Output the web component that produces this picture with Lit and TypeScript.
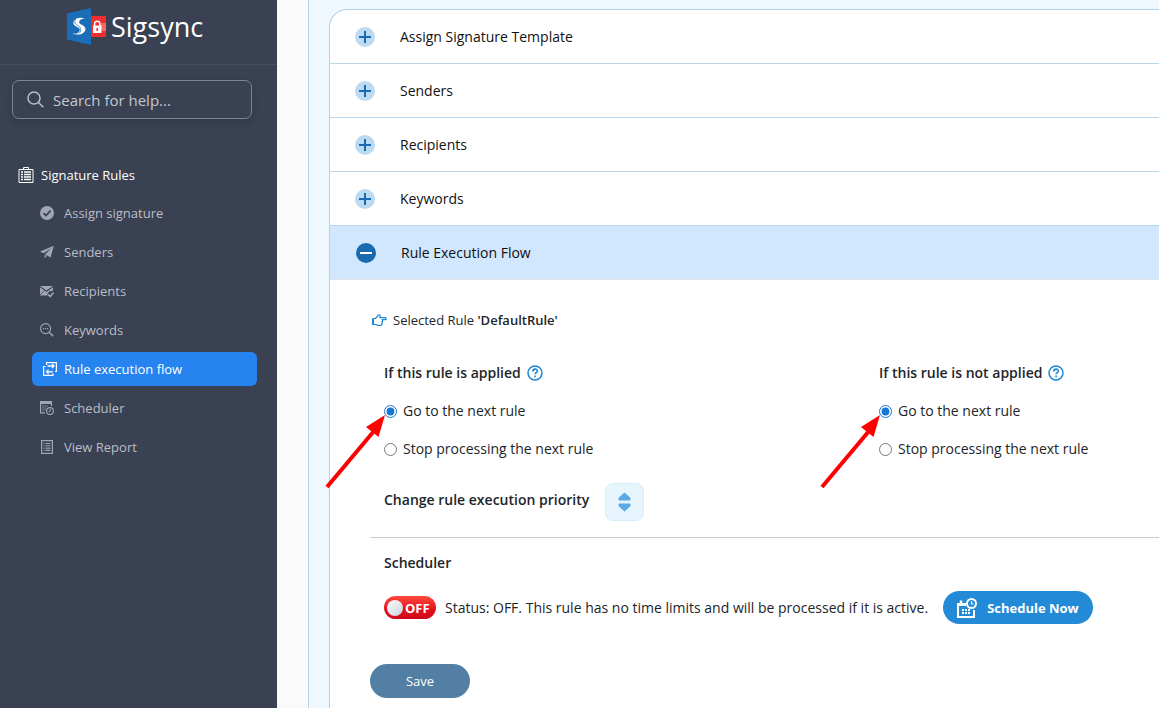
import { LitElement, html, css, svg, nothing } from "lit";
import { customElement, state } from "lit/decorators.js";

const box = (size: number, body: unknown, view = size) =>
  html`<svg width=${size} height=${size} viewBox="0 0 ${view} ${view}" fill="none" aria-hidden="true">${body}</svg>`;

const icons: Record<string, unknown> = {
  assign: box(14, svg`<circle cx="7" cy="7" r="7" fill="currentColor"/><path d="M3.6 7.2 6 9.6 10.6 4.6" stroke="#394152" stroke-width="1.7"/>`),
  senders: box(14, svg`<path d="M13.800.8 0 6.600l3.600 1.700L11 3.200 5.300 9.300v.2l5.300 3.100zM4.600 9.600v3.900l2-2.600z" fill="currentColor"/>`),
  recipients: box(14, svg`<path d="M0 2h13L6.500 6.600zM0 3.300v8.200h7.200l.5-2L9 7.600l4-.8V3.300L6.500 7.900z" fill="currentColor"/><path d="m0 11 4-4.200" stroke="#394152" stroke-width=".8"/><path d="m8 10.400 2.200 2.200 3.400-4" stroke="currentColor" stroke-width="1.500"/>`),
  keywords: box(14, svg`<circle cx="5.600" cy="5.600" r="5" stroke="currentColor" stroke-width="1.100"/><path d="m9.200 9.200 4 4" stroke="currentColor" stroke-width="1.600"/><path d="M3 5h1.200v1.200H3zM5 5h1.200v1.200H5zM7 5h1.200v1.200H7z" fill="currentColor"/>`),
  flow: box(14, svg`<path d="M3.500 3V.600h9.900V9.500H12M10 11.500v1.900H.600V4.500H2.500" stroke="currentColor" stroke-width="1.200"/><path d="M4.500 4h6.500M9 2l2 2-2 2M10 9.800H3.500M5.500 7.800l-2 2 2 2" stroke="currentColor" stroke-width="1.300"/>`),
  scheduler: box(14, svg`<path d="M0 0h12v3H0z" fill="currentColor"/><path d="M.6 2v9.900H5M11.500 3v2" stroke="currentColor" stroke-width="1.200"/><path d="M2.500 5h5.500M2.500 7h4M2.500 9H6" stroke="currentColor" stroke-width="1.100" stroke-dasharray="1.200 .8"/><circle cx="10" cy="10" r="3.400" stroke="currentColor" stroke-width="1.100"/><path d="M10.200 8v2.400H8.600" stroke="currentColor"/>`),
  report: box(14, svg`<path d="M1.600.6h10.800v12.800H1.600z" stroke="currentColor" stroke-width="1.200"/><path d="M3.500 3.500h1M5.500 3.500h5M3.500 5.800h1M5.500 5.800h5M3.500 8.100h1M5.500 8.100h5M3.500 10.400h1M5.500 10.400h5" stroke="currentColor" stroke-width="1.100"/>`),
};

const clipboard = box(16, svg`<path d="M5.500 2.500V.5h5v2M1 2.500h14v13H1z" stroke="#fff"/><path d="M3 5h2M6 5h7M3 7.500h2M6 7.500h7M3 10h2M6 10h7M3 12.500h2M6 12.500h7" stroke="#fff" stroke-width="1.300"/>`);

const logo = html`<svg width="40" height="38" viewBox="0 0 40 38" aria-hidden="true">
  <path d="M24 8h15v21H24z" fill="#ee2d2f"/>
  <path d="M34 15h5v8h-5z" fill="#f46a68"/>
  <path d="M0 5.500 24 0v37L0 31.500z" fill="#1b6db8"/>
  <path d="M18.500 11c-5-2.500-11-1-12 2.800-.8 3.200 1.700 4.300 4.500 5.600 2.500 1.200 2.500 3.600-.5 5.800-1.500.8-3.500.5-5 0 4 2.600 10.500 1.500 12.500-2.200 1.500-3.200-.8-5.100-3.800-6.500-3-1.500-2.500-4 .3-5.300 1.300-.6 2.700-.6 4-.2z" fill="#fff"/>
  <path d="M8.800 11c-2 2.500-1 4.600 1.500 6.200 3.500 2.200 4.700 4 2 8.300" fill="none" stroke="#1b6db8" stroke-width=".8"/>
  <path d="M26 17.500h8.500v7.500H26z" fill="#fff"/>
  <path d="M27.600 18v-2.300c0-3.200 5.300-3.200 5.300 0V18" fill="none" stroke="#fff" stroke-width="1.500"/>
  <path d="M30.200 20v3" stroke="#ee2d2f" stroke-width="1.500"/>
</svg>`;

const help = box(16, svg`<circle cx="8" cy="8" r="7" stroke="#1c86d6" stroke-width="1.500"/><path d="M5.800 6.400c0-3 4.600-2.900 4.600-.3C10.400 7.700 8.100 7.700 8.100 9.300M8.100 10.500v1.700" stroke="#1c86d6" stroke-width="1.600"/>`);

const hand = html`<svg width="15" height="13" viewBox="0 0 15 13" fill="none" aria-hidden="true">
  <path d="M1 4.500h2.500L6.300 1.200c.5-.8 1.900-.4 1.800.7L7.700 3.700h5.600c1.200 0 1.200 1.900 0 1.900H10c1 .6.900 1.600 0 2 .7.600.5 1.600-.3 1.900.4.800 0 1.900-1 1.900H6l-2.300-.9H1z" stroke="#1c86d6" stroke-width="1.200" stroke-linejoin="round"/>
  <path d="M1 4.500v6.200" stroke="#1c86d6" stroke-width="2"/>
</svg>`;

const calendar = html`<svg width="20" height="20" viewBox="0 0 20 20" fill="none" aria-hidden="true">
  <path d="M9 6H1v13h16v-7" stroke="#fff" stroke-width="2"/>
  <path d="M1 5h8v3H1z" fill="#fff"/><path d="M4 2.500v4" stroke="#fff" stroke-width="2.500"/>
  <path d="M5 12h8M5 15h8" stroke="#fff" stroke-width="2" stroke-dasharray="2 1"/>
  <circle cx="14.500" cy="5.500" r="4.500" stroke="#fff" stroke-width="2"/>
  <path d="M14.500 3v3h2" stroke="#fff" stroke-width="1.200"/>
</svg>`;

const arrow = html`<svg class="arrow" width="62" height="76" viewBox="0 0 62 76" aria-hidden="true">
  <path d="M2 74 49 18" stroke="#f00" stroke-width="4"/>
  <path d="M60 2 41 14l12.500 10z" fill="#f00"/>
</svg>`;

@customElement("app-root")
export class AppRoot extends LitElement {
  @state() private open = "Rule Execution Flow";
  @state() private current = "flow";

  private nav = [
    ["assign", "Assign signature"],
    ["senders", "Senders"],
    ["recipients", "Recipients"],
    ["keywords", "Keywords"],
    ["flow", "Rule execution flow"],
    ["scheduler", "Scheduler"],
    ["report", "View Report"],
  ];
  private sections = ["Assign Signature Template", "Senders", "Recipients", "Keywords", "Rule Execution Flow"];

  static styles = css`
    :host { display: flex; height: 100vh; overflow: hidden; background: #fafafa; color: #212529;
      font-family: "Segoe UI", "Open Sans", "Noto Sans", sans-serif; font-size: 14px; line-height: 20px; }
    * { box-sizing: border-box; }
    svg { flex: none; display: block; }
    button, input { font: inherit; color: inherit; margin: 0; }
    h2, p, fieldset, legend { margin: 0; padding: 0; border: 0; }
    .side { flex: none; width: 277px; background: #394152; color: #b9bec8; }
    .brand { display: flex; align-items: flex-start; gap: 4px; height: 65px; padding: 8px 0 0 67px;
      border-bottom: 1px solid #435062; color: #fff; font-size: 27px; font-weight: 500; line-height: 38px; text-decoration: none; }
    .search { display: flex; align-items: center; gap: 9px; height: 39px; margin: 15px 25px 0 12px; padding: 0 14px;
      border: 1px solid #7d8493; border-radius: 7px; box-shadow: 0 3px 8px rgba(0, 0, 0, .12); }
    .search input { flex: 1; min-width: 0; padding: 0; border: 0; outline: 0; background: none; font-size: 15px; }
    .search input::placeholder { color: #c3c8d0; opacity: 1; }
    .title { display: flex; align-items: center; gap: 7px; margin: 46px 0 0 18px; color: #fff; font-size: 13px; font-weight: 500; }
    .nav { display: grid; gap: 5px; margin-top: 11px; padding: 0 20px 0 32px; font-size: 13px; font-weight: 500; }
    .nav a { display: flex; align-items: center; gap: 10px; height: 34px; padding-left: 8px; border-radius: 6px;
      color: #b9bec8; text-decoration: none; }
    .nav a svg { color: #a0a6b3; }
    .nav a.on, .nav a.on svg { color: #fff; }
    .nav a.on { gap: 7px; padding-left: 11px; background: #2684f0; }
    .main { flex: 1; min-width: 0; margin-left: 31px; padding: 9px 0 0 20px; border-left: 1px solid #b5d0e4; background: #f0f8ff; }
    .card { height: 100%; border: 1px solid #b5d0e4; border-width: 1px 0 0 1px; border-radius: 18px 0 0 0; background: #fff; }
    .row { display: flex; align-items: center; gap: 25px; width: 100%; height: 54px; padding: 0 25px; border: 0;
      border-bottom: 1px solid #b9d6ea; background: none; color: #111; text-align: left; }
    .row.on { height: 55px; margin-top: -1px; padding-left: 26px; border-top: 1px solid #b9d6ea; border-bottom-color: #dfe3e6; background: #d0e7fd; }
    .body { padding: 30px 0 0 40px; }
    .chosen { display: flex; align-items: center; gap: 6px; padding-left: 2px; font-size: 13px; }
    .bold { font-weight: 600; }
    .strong { font-size: 14px; font-weight: 600; }
    .groups { display: grid; grid-template-columns: 495px 1fr; margin: 33px 0 0 14px; }
    .legend { display: flex; align-items: center; gap: 6px; }
    .choice { position: relative; display: flex; align-items: center; gap: 6px; height: 20px; margin-top: 18px; }
    .choice input { width: 13px; height: 13px; accent-color: #1976d2; }
    .arrow { position: absolute; right: 100%; top: 12px; margin-right: -3px; pointer-events: none; }
    .priority { display: flex; align-items: center; gap: 16px; margin: 24px 0 0 14px; }
    .priority .strong { padding-bottom: 4px; }
    .sort { display: grid; place-items: center; width: 39px; height: 38px; padding: 0; border: 1px solid #d8edf8; border-radius: 8px; background: #e7f5fe; }
    .sched { margin-top: 16px; padding: 15px 0 0 14px; border-top: 1px solid #ccc; }
    .status { display: flex; align-items: center; gap: 9px; margin-top: 18px; }
    .toggle { display: flex; align-items: center; gap: 2px; width: 52px; height: 23px; padding: 0 3px; border: 0; border-radius: 12px;
      background: linear-gradient(#ff4b3c, #e2101f 60%, #cf0a1b); color: #fff; font-size: 13px; font-weight: 700; }
    .knob { width: 16px; height: 16px; border-radius: 50%; background: linear-gradient(135deg, #fff, #c8d2dc); }
    .now { display: flex; align-items: center; gap: 10px; height: 33px; margin-left: 6px; padding: 0 14px; border: 0; border-radius: 17px;
      background: #228ad6; color: #fff; font-size: 13px; font-weight: 700; white-space: nowrap; }
    .save { width: 100px; height: 34px; margin-top: 40px; border: 0; border-radius: 17px; background: #527fa3; color: #fff; font-size: 13px; font-weight: 500; }
  `;

  private group(name: string, title: string) {
    return html`<fieldset>
      <legend class="legend strong">${title} ${help}</legend>
      <label class="choice"><input type="radio" name=${name} checked />Go to the next rule${arrow}</label>
      <label class="choice"><input type="radio" name=${name} />Stop processing the next rule</label>
    </fieldset>`;
  }

  private details() {
    return html`<div class="body">
      <p class="chosen">${hand}<span>Selected Rule <b class="bold">'DefaultRule'</b></span></p>
      <div class="groups">
        ${this.group("applied", "If this rule is applied")}
        ${this.group("not-applied", "If this rule is not applied")}
      </div>
      <div class="priority">
        <span class="strong">Change rule execution priority</span>
        <button class="sort" aria-label="Change priority">
          <svg width="15" height="20" viewBox="0 0 15 20" aria-hidden="true"><path d="M7.500 1 13 6v2H2V6zM2 12h11v2l-5.500 5L2 14z" fill="#5da9e4" stroke="#5da9e4" stroke-linejoin="round"/></svg>
        </button>
      </div>
      <div class="sched">
        <h2 class="strong">Scheduler</h2>
        <div class="status">
          <button class="toggle" role="switch" aria-checked="false"><span class="knob"></span>OFF</button>
          <span>Status: OFF. This rule has no time limits and will be processed if it is active.</span>
          <button class="now">${calendar}Schedule Now</button>
        </div>
      </div>
      <button class="save">Save</button>
    </div>`;
  }

  render() {
    return html`
      <aside class="side">
        <a class="brand" href="#">${logo}<span>Sigsync</span></a>
        <label class="search">
          <svg width="17" height="17" viewBox="0 0 17 17" fill="none" aria-hidden="true"><circle cx="7" cy="7" r="6" stroke="#b9bec8" stroke-width="1.500"/><path d="m11.300 11.300 5 5" stroke="#b9bec8" stroke-width="1.500"/></svg>
          <input type="search" aria-label="Search for help" placeholder="Search for help..." />
        </label>
        <h2 class="title">${clipboard}Signature Rules</h2>
        <nav class="nav">
          ${this.nav.map(([key, text]) => html`<a href="#${key}" class=${key === this.current ? "on" : ""} @click=${() => (this.current = key)}>${icons[key]}${text}</a>`)}
        </nav>
      </aside>
      <main class="main">
        <div class="card">
          ${this.sections.map((name) => {
            const on = name === this.open;
            return html`<button class="row ${on ? "on" : ""}" aria-expanded=${on} @click=${() => (this.open = name)}>
              ${box(20, svg`<circle cx="10" cy="10" r="10" fill=${on ? "#196ab0" : "#bcdaf2"}/><path d=${on ? "M4 10h12" : "M4 10h12M10 4v12"} stroke=${on ? "#fff" : "#196ab0"} stroke-width="2"/>`)}
              ${name}
            </button>`;
          })}
          ${this.open === "Rule Execution Flow" ? this.details() : nothing}
        </div>
      </main>
    `;
  }
}
